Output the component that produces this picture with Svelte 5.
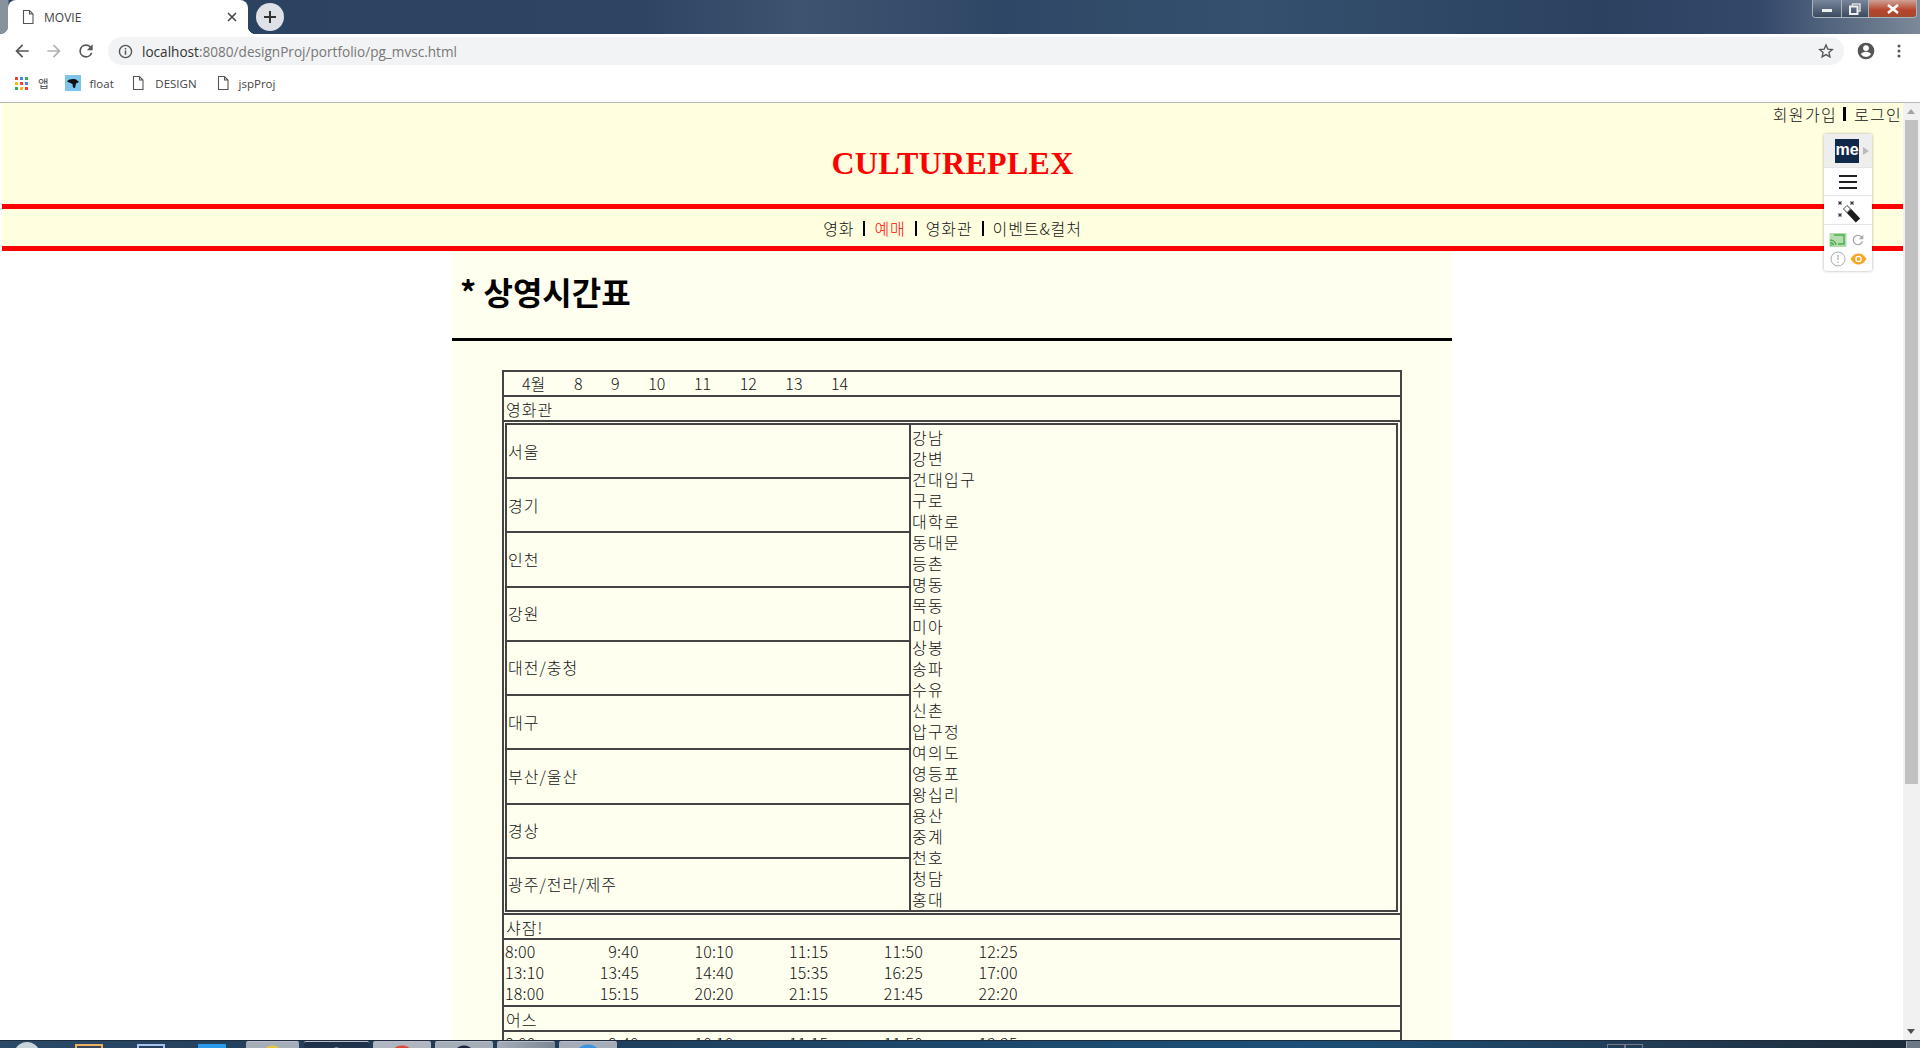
<script>
	const dates = ['4월', '8', '9', '10', '11', '12', '13', '14'];
	const regions = ['서울', '경기', '인천', '강원', '대전/충청', '대구', '부산/울산', '경상', '광주/전라/제주'];
	const theaters = ['강남', '강변', '건대입구', '구로', '대학로', '동대문', '등촌', '명동', '목동', '미아', '상봉', '송파', '수유', '신촌', '압구정', '여의도', '영등포', '왕십리', '용산', '중계', '천호', '청담', '홍대'];
	const movies = [
		{ title: '샤잠!', times: ['8:00', '9:40', '10:10', '11:15', '11:50', '12:25', '13:10', '13:45', '14:40', '15:35', '16:25', '17:00', '18:00', '15:15', '20:20', '21:15', '21:45', '22:20'] },
		{ title: '어스', times: ['8:00', '9:40', '10:10', '11:15', '11:50', '12:25', '13:10', '13:45', '14:40', '15:35', '16:25', '17:00'] }
	];
	const appColors = ['#ea4335', '#4285f4', '#34a853', '#fbbc05', '#ea4335', '#4285f4', '#34a853', '#fbbc05', '#ea4335'];
	const menu = ['영화', '예매', '영화관', '이벤트&컬처'];
	const filePath = 'M3.5 1.5h6l3.5 3.5v9.5h-9.5z M9.5 1.5v3.5h3.5';
</script>

<div class="window">
	<div class="tabstrip">
		<div class="tab">
			<svg class="fileicon" width="16" height="16" viewBox="0 0 16 16"><path d={filePath} fill="none" stroke="#555" stroke-width="1.1" /></svg>
			<span class="tabtitle">MOVIE</span>
			<svg class="tabclose" width="10" height="10" viewBox="0 0 10 10"><path d="M1 1l8 8M9 1l-8 8" stroke="#444" stroke-width="1.6" /></svg>
		</div>
		<div class="newtab">
			<svg width="14" height="14" viewBox="0 0 14 14"><path d="M7 1v12M1 7h12" stroke="#333" stroke-width="2" /></svg>
		</div>
		<div class="winbtns">
			<div class="winbtn min"><i></i></div>
			<div class="winbtn max">
				<svg width="12" height="12" viewBox="0 0 12 12"><path d="M3.500 3V1h7.500v7H9" fill="none" stroke="#ddd" stroke-width="1.500" /><rect x="1" y="3.500" width="7.500" height="7.500" fill="none" stroke="#eee" stroke-width="2" /></svg>
			</div>
			<div class="winbtn close">
				<svg width="14" height="10" viewBox="0 0 14 10"><path d="M2 1l10 8M12 1l-10 8" stroke="#fff" stroke-width="2.6" /></svg>
			</div>
		</div>
	</div>

	<div class="toolbar">
		<button class="navbtn" aria-label="back">
			<svg width="20" height="20" viewBox="0 0 24 24"><path d="M20 11H7.83l5.59-5.59L12 4l-8 8 8 8 1.41-1.41L7.83 13H20v-2z" fill="#555" /></svg>
		</button>
		<button class="navbtn" aria-label="forward">
			<svg width="20" height="20" viewBox="0 0 24 24"><path d="M4 11h12.17l-5.59-5.59L12 4l8 8-8 8-1.41-1.41L16.17 13H4v-2z" fill="#b4b4b4" /></svg>
		</button>
		<button class="navbtn" aria-label="reload">
			<svg width="20" height="20" viewBox="0 0 24 24"><path d="M17.65 6.35A7.96 7.96 0 0 0 12 4a8 8 0 1 0 7.73 10h-2.08A6 6 0 1 1 12 6c1.66 0 3.14.69 4.22 1.78L13 11h7V4l-2.35 2.35z" fill="#555" /></svg>
		</button>
		<div class="urlbar">
			<svg width="15" height="15" viewBox="0 0 16 16"><circle cx="8" cy="8" r="6.5" fill="none" stroke="#555" stroke-width="1.5" /><path d="M8 7v4.5M8 4.2v1.6" stroke="#555" stroke-width="1.6" /></svg>
			<span class="url"><b>localhost</b>:8080/designProj/portfolio/pg_mvsc.html</span>
			<svg class="star" width="16" height="16" viewBox="0 0 24 24"><path d="M12 3l2.7 6.2 6.8.6-5.1 4.5 1.5 6.6L12 17.4l-5.9 3.5 1.5-6.6-5.1-4.5 6.8-.6z" fill="none" stroke="#555" stroke-width="2" /></svg>
		</div>
		<button class="navbtn" aria-label="profile">
			<svg width="20" height="20" viewBox="0 0 24 24"><path d="M12 2a10 10 0 1 0 0 20 10 10 0 0 0 0-20zm0 3a3.5 3.5 0 1 1 0 7 3.5 3.5 0 0 1 0-7zm0 14.2a7.5 7.5 0 0 1-6-3.2c.03-2 4-3.1 6-3.1s5.97 1.1 6 3.1a7.5 7.5 0 0 1-6 3.2z" fill="#555" /></svg>
		</button>
		<button class="navbtn dots" aria-label="menu">
			<svg width="16" height="16" viewBox="0 0 16 16"><circle cx="8" cy="3" r="1.5" fill="#555" /><circle cx="8" cy="8" r="1.5" fill="#555" /><circle cx="8" cy="13" r="1.5" fill="#555" /></svg>
		</button>
	</div>

	<div class="bookmarks">
		<div class="apps">
			{#each appColors as color}
				<i style="background:{color}"></i>
			{/each}
		</div>
		<span class="bm first">앱</span>
		<svg class="favicon" width="16" height="16" viewBox="0 0 16 16"><rect width="16" height="16" fill="#7cc4ec" /><path d="M2 6.500C4 4 8 3.500 11 4.500l3 2.500-3 1.500-1 4.500-2-.5-.5-3.500z" fill="#111" /></svg>
		<span class="bm float">float</span>
		<svg class="fileicon one" width="16" height="16" viewBox="0 0 16 16"><path d={filePath} fill="none" stroke="#555" stroke-width="1.1" /></svg>
		<span class="bm design">DESIGN</span>
		<svg class="fileicon two" width="16" height="16" viewBox="0 0 16 16"><path d={filePath} fill="none" stroke="#555" stroke-width="1.1" /></svg>
		<span class="bm jsp">jspProj</span>
	</div>

	<div class="page">
		<div class="viewport">
			<header>
				<ul class="util">
					<li>회원가입</li>
					<li>로그인</li>
				</ul>
				<h1>CULTUREPLEX</h1>
				<nav>
					<ul>
						{#each menu as item, i}
							<li class:active={i === 1}>{item}</li>
						{/each}
					</ul>
				</nav>
			</header>

			<main>
				<h2>* 상영시간표</h2>
				<table class="schedule">
					<tbody>
						<tr>
							<td>
								<ul class="dates">
									{#each dates as d}
										<li>{d}</li>
									{/each}
								</ul>
							</td>
						</tr>
						<tr><td class="label">영화관</td></tr>
						<tr>
							<td class="wrap">
								<table class="theaters">
									<tbody>
										{#each regions as region, i}
											<tr>
												<td class="region">{region}</td>
												{#if i === 0}
													<td class="names" rowspan={regions.length}>
														{#each theaters as name}
															<div>{name}</div>
														{/each}
													</td>
												{/if}
											</tr>
										{/each}
									</tbody>
								</table>
							</td>
						</tr>
						{#each movies as movie}
							<tr><td class="label">{movie.title}</td></tr>
							<tr>
								<td class="wrap-times">
									<div class="times">
										{#each movie.times as time}
											<span>{time}</span>
										{/each}
									</div>
								</td>
							</tr>
						{/each}
					</tbody>
				</table>
			</main>
		</div>

		<div class="scrollbar">
			<div class="arrow up"></div>
			<div class="thumb"></div>
			<div class="arrow down"></div>
		</div>

		<aside class="widget">
			<div class="w-logo">
				<span class="me">me</span>
				<i class="tri"></i>
			</div>
			<div class="w-row burger"><i></i><i></i><i></i></div>
			<div class="w-row wand">
				<svg width="48" height="28" viewBox="0 0 48 28">
					<path d="M14.500 5.500l3 3M17.500 5.500l-3 3M26.500 5.500l3 3M29.500 5.500l-3 3M14.500 17.500l3 3M17.500 17.500l-3 3" stroke="#333" stroke-width="1.100" />
					<path d="M21 11l4 4" stroke="#555" stroke-width="6" />
					<path d="M21.500 11.500l3 3" stroke="#fff" stroke-width="4" />
					<path d="M25 15l9 9.500" stroke="#1c1c1c" stroke-width="6" />
				</svg>
			</div>
			<div class="w-tools">
				<svg width="18" height="16" viewBox="0 0 18 16">
					<rect width="17" height="14" x=".5" y="1" fill="#b5dcae" />
					<path d="M5 3h10v9h-6M1 8a6 6 0 0 1 6 5M1 10.500a3.500 3.500 0 0 1 3.500 3M1 13h1.500" fill="none" stroke="#4caf50" stroke-width="1.400" />
				</svg>
				<svg width="16" height="16" viewBox="0 0 24 24"><path d="M17.65 6.35A7.96 7.96 0 0 0 12 4a8 8 0 1 0 7.73 10h-2.08A6 6 0 1 1 12 6c1.66 0 3.14.69 4.22 1.78L13 11h7V4l-2.35 2.35z" fill="#aaa" /></svg>
				<svg width="16" height="16" viewBox="0 0 16 16"><circle cx="8" cy="8" r="7" fill="none" stroke="#aaa" stroke-width="1" /><path d="M8 4v5M8 10.500v1.500" stroke="#aaa" stroke-width="1.200" /></svg>
				<svg width="17" height="12" viewBox="0 0 17 12"><path d="M.5 6C3 2 5.500.5 8.500.5S14 2 16.500 6C14 10 11.500 11.500 8.500 11.500S3 10 .5 6z" fill="#f5a623" /><circle cx="8.500" cy="6" r="3.300" fill="#fff" /><circle cx="8.500" cy="6" r="1.900" fill="#f5a623" /></svg>
			</div>
		</aside>
	</div>

	<div class="taskbar">
		<div class="orb"></div>
		<div class="pin orange"></div>
		<div class="pin blue"></div>
		<div class="pin cyan"></div>
		<div class="tbtn w52"></div>
		<div class="tbtn w64 dark"></div>
		<div class="tbtn red"></div>
		<div class="tbtn navy"></div>
		<div class="tbtn"></div>
		<div class="tbtn sky"></div>
		<div class="tray"><i></i><i></i></div>
		<div class="showdesk"></div>
	</div>
</div>

<style>
	:global(body) {
		margin: 0;
		overflow: hidden;
	}
	.window {
		width: 1920px;
		height: 1048px;
		display: flex;
		flex-direction: column;
		overflow: hidden;
		font-family: 'Noto Sans CJK KR', 'Noto Sans', sans-serif;
		font-size: 16px;
		font-weight: 300;
		color: #111;
		background: #fff;
	}
	ul {
		list-style: none;
		margin: 0;
		padding: 0;
	}
	button {
		border: 0;
		background: none;
		padding: 0;
		display: flex;
		align-items: center;
		justify-content: center;
	}

	/* browser frame */
	.tabstrip {
		height: 34px;
		flex: none;
		display: flex;
		align-items: flex-start;
		background: linear-gradient(90deg, #87929f 0, #87929f 8px, #2b4160 9px, #2d4463 640px, #3d5470 800px, #2f4766 1000px, #34506e 1250px, #2b4160 1600px, #33496a 1760px, #7b8999 1920px);
	}
	.tab {
		position: relative;
		width: 240px;
		height: 34px;
		margin-left: 8px;
		background: #fff;
		border-radius: 8px 8px 0 0;
		display: flex;
		align-items: center;
		font-family: 'Open Sans', sans-serif;
		font-size: 12px;
		font-weight: 400;
		color: #444;
	}
	.tab::before,
	.tab::after {
		content: '';
		position: absolute;
		bottom: 0;
		width: 8px;
		height: 8px;
	}
	.tab::before {
		left: -8px;
		background: radial-gradient(circle at 0 0, transparent 8px, #fff 8.500px);
	}
	.tab::after {
		right: -8px;
		background: radial-gradient(circle at 100% 0, transparent 8px, #fff 8.500px);
	}
	.tab .fileicon {
		margin-left: 12px;
	}
	.tabtitle {
		margin-left: 8px;
		flex: 1;
	}
	.tabclose {
		margin-right: 11px;
	}
	.newtab {
		width: 28px;
		height: 28px;
		margin: 3px 0 0 8px;
		border-radius: 50%;
		background: #dee1e6;
		display: flex;
		align-items: center;
		justify-content: center;
	}
	.winbtns {
		margin-left: auto;
		margin-right: 3px;
		display: flex;
		height: 17px;
		border: 1px solid #aab4bf;
		border-top: 0;
		border-radius: 0 0 4px 4px;
		overflow: hidden;
	}
	.winbtn {
		display: flex;
		align-items: center;
		justify-content: center;
		height: 17px;
		background: linear-gradient(#77869a, #3b4a5e);
		border-right: 1px solid #aab4bf;
	}
	.min {
		width: 28px;
	}
	.min i {
		width: 10px;
		height: 3px;
		margin-top: 3px;
		background: #eee;
	}
	.max {
		width: 26px;
	}
	.close {
		width: 47px;
		border-right: 0;
		background: linear-gradient(#cfa297, #b8442c 60%, #a34a30);
	}
	.toolbar {
		height: 34px;
		flex: none;
		display: flex;
		align-items: center;
		padding: 0 6px;
		box-sizing: border-box;
	}
	.navbtn {
		width: 32px;
		height: 32px;
	}
	.dots {
		position: relative;
		left: 1px;
	}
	.urlbar {
		flex: 1;
		height: 28px;
		margin: 0 6px;
		padding: 0 10px;
		box-sizing: border-box;
		border-radius: 14px;
		background: #f1f3f4;
		display: flex;
		align-items: center;
	}
	.url {
		flex: 1;
		margin-left: 9px;
		font-family: 'Open Sans', sans-serif;
		font-size: 13.600px;
		font-weight: 400;
		color: #777;
	}
	.url b {
		font-weight: 400;
		color: #333;
	}
	.bookmarks {
		flex: none;
		display: flex;
		align-items: center;
		padding-bottom: 4px;
		box-sizing: border-box;
		height: 35px;
		font-family: 'Open Sans', sans-serif;
		font-size: 11.500px;
		font-weight: 400;
		color: #444;
		border-bottom: 1px solid #b8b8b8;
	}
	.apps {
		margin-left: 15px;
		width: 13px;
		height: 13px;
		display: grid;
		grid-template-columns: repeat(3, 3px);
		grid-auto-rows: 3px;
		gap: 2px;
	}
	.bm.first {
		margin-left: 10px;
		font-family: 'Noto Sans CJK KR', sans-serif;
	}
	.favicon {
		margin-left: 16px;
	}
	.bm.float {
		margin-left: 9px;
	}
	.fileicon.one {
		margin-left: 16px;
	}
	.bm.design {
		margin-left: 9.500px;
	}
	.fileicon.two {
		margin-left: 18px;
	}
	.bm.jsp {
		margin-left: 8px;
	}

	/* page */
	.page {
		position: relative;
		flex: 1;
		min-height: 0;
		display: flex;
	}
	.viewport {
		flex: 1;
		min-width: 0;
		overflow: hidden;
		padding-left: 1px;
	}
	header {
		margin: 0 0 0 1px;
		background: #ffffe0;
	}
	.util {
		display: flex;
		justify-content: flex-end;
		height: 21px;
		align-items: center;
		padding-right: 1px;
		line-height: 16px;
		letter-spacing: 1.300px;
	}
	.util li {
		height: 14px;
		display: flex;
		align-items: center;
		padding: 0 6.500px 0 11px;
		border-right: 3px solid #000;
	}
	.util li:last-child {
		padding: 0 0 0 7.500px;
		border-right: 0;
	}
	h1 {
		margin: 19px 0 0;
		padding-bottom: 21px;
		text-align: center;
		font-family: 'Liberation Serif', serif;
		font-size: 32px;
		font-weight: 700;
		letter-spacing: 0.300px;
		line-height: 40px;
		color: #f00;
	}
	nav {
		border-top: 5px solid #f00;
		border-bottom: 5px solid #f00;
	}
	nav ul {
		display: flex;
		justify-content: center;
		align-items: center;
		height: 37px;
		padding-top: 2px;
		box-sizing: border-box;
		letter-spacing: 0.900px;
	}
	nav li {
		height: 15px;
		line-height: 15px;
		padding: 0 9px;
		border-right: 2px solid #000;
	}
	nav li:last-child {
		border-right: 0;
	}
	nav li.active {
		color: #f00;
	}
	main {
		width: 1000px;
		margin: 0 auto;
		background: #fffff0;
		padding-bottom: 40px;
	}
	h2 {
		margin: 0;
		padding: 19px 0 26px 8px;
		font-size: 32px;
		font-weight: 700;
		line-height: 42px;
		color: #000;
		border-bottom: 3px solid #000;
	}

	/* schedule */
	table {
		border-collapse: separate;
		border-spacing: 0;
		box-sizing: border-box;
	}
	.schedule {
		width: 900px;
		margin: 29px auto 0;
		border: 2px solid #444;
		line-height: 23px;
	}
	.schedule > tbody > tr > td {
		padding: 0 0 0 2px;
		border-bottom: 2px solid #444;
	}
	.schedule > tbody > tr > td.label {
		padding-top: 1px;
		line-height: 22px;
		letter-spacing: 1px;
	}
	.schedule > tbody > tr > td.wrap {
		padding: 1px 2px 1px 1px;
	}
	.schedule > tbody > tr > td.wrap-times {
		padding: 1px 0 1px 1px;
		line-height: 21px;
		letter-spacing: 0.200px;
	}
	.dates {
		display: flex;
		gap: 28.600px;
		padding-left: 16px;
	}
	.theaters {
		width: 893px;
		border: 2px solid #444;
	}
	.region {
		width: 401px;
		height: 52px;
		padding: 0 0 0 1px;
		border-bottom: 2px solid #444;
		line-height: 21px;
		letter-spacing: 1px;
	}
	tr:last-child > .region {
		height: 51px;
		border-bottom: 0;
	}
	.names {
		padding: 2px 0 0 1px;
		border-left: 2px solid #444;
		line-height: 21px;
		letter-spacing: 1.250px;
		vertical-align: top;
	}
	.times {
		display: grid;
		grid-template-columns: repeat(6, 94.7px);
		justify-items: start;
	}
	.times span:nth-child(6n + 2) {
		width: 39px;
		text-align: right;
	}

	/* scrollbar */
	.scrollbar {
		width: 17px;
		flex: none;
		background: #f1f1f1;
		display: flex;
		flex-direction: column;
	}
	.arrow {
		height: 17px;
		flex: none;
		position: relative;
	}
	.arrow::after {
		content: '';
		position: absolute;
		left: 4px;
		top: 6px;
		border-left: 4.500px solid transparent;
		border-right: 4.500px solid transparent;
	}
	.up::after {
		border-bottom: 5px solid #a3a3a3;
	}
	.down {
		margin-top: auto;
	}
	.down::after {
		border-top: 5px solid #505050;
	}
	.thumb {
		height: 664px;
		margin: 0 2px;
		background: #c1c1c1;
	}

	/* floating extension widget */
	.widget {
		position: absolute;
		top: 31px;
		right: 48px;
		width: 48px;
		background: #fff;
		box-shadow: 0 0 3px rgba(0, 0, 0, 0.35);
		border-radius: 2px;
	}
	.w-logo {
		height: 33px;
		background: #eee;
		display: flex;
		align-items: center;
		padding-left: 11px;
		box-sizing: border-box;
	}
	.me {
		width: 24px;
		height: 24px;
		background: #10294a;
		color: #fff;
		font-family: 'Liberation Sans', sans-serif;
		font-weight: 700;
		font-size: 16px;
		line-height: 22px;
		text-align: center;
	}
	.tri {
		margin-left: 4px;
		border-left: 6px solid #bbb;
		border-top: 4px solid transparent;
		border-bottom: 4px solid transparent;
	}
	.w-row {
		border-top: 1px solid #e6e6e6;
		display: flex;
		align-items: center;
		justify-content: center;
	}
	.burger {
		height: 28px;
		box-sizing: border-box;
		flex-direction: column;
		gap: 4px;
	}
	.burger i {
		width: 18px;
		height: 2px;
		background: #222;
	}
	.wand {
		height: 29px;
		box-sizing: border-box;
	}
	.w-tools {
		border-top: 1px solid #e6e6e6;
		height: 47px;
		box-sizing: border-box;
		display: grid;
		grid-template-columns: 1fr 1fr;
		justify-items: center;
		align-items: center;
		padding: 5px 4px 3px;
	}

	/* taskbar */
	.taskbar {
		height: 8px;
		flex: none;
		display: flex;
		overflow: hidden;
		box-sizing: border-box;
		border-top: 1px solid #1d2b3a;
		background: linear-gradient(90deg, #2a4a68 0, #1f3a55 400px, #1c5078 1300px, #223950 1700px, #1c2c3c 1880px);
	}
	.orb {
		width: 26px;
		height: 26px;
		margin: 1px 0 0 14px;
		flex: none;
		border-radius: 50%;
		background: #c9d3dc;
	}
	.pin {
		width: 28px;
		height: 20px;
		margin-top: 3px;
		flex: none;
		border: 2px solid;
		box-sizing: border-box;
	}
	.orange {
		margin-left: 35px;
		border-color: #f0b060;
		background: #3a4658;
	}
	.blue {
		margin-left: 34px;
		border-color: #a8c4f0;
		background: #24405f;
	}
	.cyan {
		margin-left: 33px;
		border-color: #2a9bea;
		background: #2a9bea;
	}
	.tbtn {
		width: 58px;
		flex: none;
		margin-left: 4px;
		height: 20px;
		border-radius: 2px 2px 0 0;
		border-top: 1px solid #bbc;
		background: linear-gradient(90deg, #a4adb8, #7c8795);
		box-sizing: border-box;
	}
	.w52 {
		width: 53px;
		margin-left: 20px;
		background: radial-gradient(circle at 50% 14px, #3a6ea0 0 6px, #e5c640 7px 10px, #a4adb8 11px);
	}
	.w64 {
		width: 65px;
		margin-left: 5px;
	}
	.dark {
		background: radial-gradient(circle at 50% 12px, #d8d4b8 0 6px, transparent 7px), linear-gradient(#1c3048, #26405a);
	}
	.red {
		background: radial-gradient(circle at 50% 16px, #d84a3a 0 12px, #b0b6bf 13px);
	}
	.navy {
		background: radial-gradient(circle at 50% 14px, #1a2440 0 10px, #a4adb8 11px);
	}
	.sky {
		background: radial-gradient(circle at 50% 16px, #3a94e0 0 13px, #a4adb8 14px);
	}
	.tray {
		margin-left: 990px;
		display: flex;
	}
	.tray i {
		width: 16px;
		height: 4px;
		margin-top: 3px;
		border: 1px solid #778;
		border-bottom: 0;
	}
	.showdesk {
		width: 13px;
		margin-left: auto;
		background: #6d7885;
		border-left: 1px solid #aab;
	}
</style>
